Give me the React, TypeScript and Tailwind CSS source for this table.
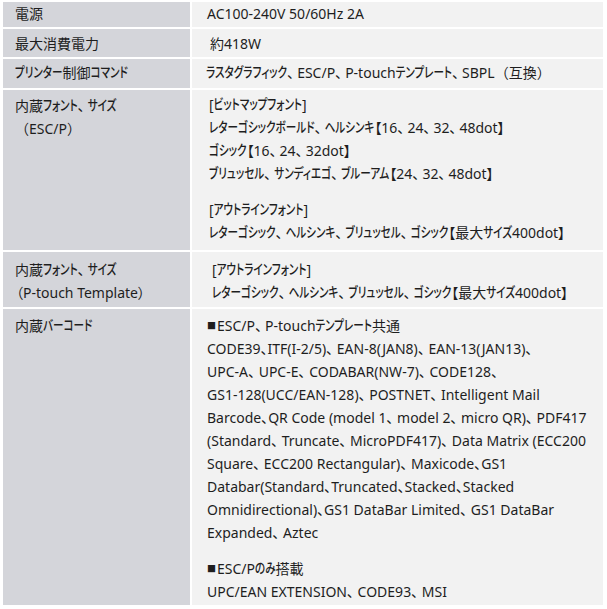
import React from "react";

const L = "w-[187px] shrink-0 bg-[#d4d5da] pl-[12px]";
const R = "w-[411px] shrink-0 bg-[#f2f2f2] pl-[15px]";
const NP = "[font-feature-settings:normal]";
const KANA =
  "inline-block align-top text-[10.6px] font-medium scale-y-[1.32] [font-feature-settings:'palt']";

function J({ t }: { t: string }) {
  const parts = t.split(/([\u3040-\u30ff]+|、|■)/);
  return (
    <>
      {parts.map((p, i) => {
        if (i % 2 === 0) return <React.Fragment key={i}>{p}</React.Fragment>;
        if (p === "、")
          return (
            <span key={i} className="mr-[3px]">
              、
            </span>
          );
        if (p === "■")
          return (
            <span key={i} className="text-[9px] align-[2px] mr-[1px] [font-feature-settings:normal]">
              ■
            </span>
          );
        return (
          <span key={i} className={KANA}>
            {p}
          </span>
        );
      })}
    </>
  );
}

export default function App() {
  return (
    <div className="w-[607px] h-[609px] bg-white pt-[2px] pl-[3px] font-['Noto_Sans','Noto_Sans_CJK_JP',sans-serif] text-[14px] leading-[23px] text-[#1e1e1e] [font-feature-settings:'palt']">
      <div className="flex flex-col gap-[2px]">
        <div className="flex gap-[2px] h-[25px]">
          <div className={L}>電源</div>
          <div className={R}>AC100-240V 50/60Hz 2A</div>
        </div>
        <div className="flex gap-[2px] h-[28px]">
          <div className={`${L} pt-[3px]`}>最大消費電力</div>
          <div className={`${R} pt-[3px]`}>
            <span className="ml-[3px]">約418W</span>
          </div>
        </div>
        <div className="flex gap-[2px] h-[29px]">
          <div className={`${L} pt-[2px] whitespace-nowrap`}>
            <J t="プリンター制御コマンド" />
          </div>
          <div className={`${R} pt-[2px] whitespace-nowrap`}>
            <span className="-ml-[1px]">
              <J t="ラスタグラフィック、ESC/P、P-touchテンプレート、SBPL" />
              <span className={NP}>（互換）</span>
            </span>
          </div>
        </div>
        <div className="flex gap-[2px] h-[160px]">
          <div className={`${L} pt-[4px] whitespace-nowrap`}>
            <div>
              <J t="内蔵フォント、サイズ" />
            </div>
            <div className={NP}>（ESC/P）</div>
          </div>
          <div className={`${R} pt-[3px] whitespace-nowrap`}>
            <div className="pl-[2px]">
              <div>
                <J t="[ビットマップフォント]" />
              </div>
              <div>
                <J t="レターゴシックボールド、ヘルシンキ【16、24、32、48dot】" />
              </div>
              <div>
                <J t="ゴシック【16、24、32dot】" />
              </div>
              <div>
                <J t="ブリュッセル、サンディエゴ、ブルーアム【24、32、48dot】" />
              </div>
              <div className="mt-[13px]">
                <J t="[アウトラインフォント]" />
              </div>
              <div>
                <J t="レターゴシック、ヘルシンキ、ブリュッセル、ゴシック【最大サイズ400dot】" />
              </div>
            </div>
          </div>
        </div>
        <div className="flex gap-[2px] h-[55px]">
          <div className={`${L} pt-[6px] whitespace-nowrap`}>
            <div>
              <J t="内蔵フォント、サイズ" />
            </div>
            <div className="pl-[1px]">（P-touch Template）</div>
          </div>
          <div className={`${R} pt-[6px] whitespace-nowrap`}>
            <div className="pl-[5px]">
              <div>
                <J t="[アウトラインフォント]" />
              </div>
              <div>
                <J t="レターゴシック、ヘルシンキ、ブリュッセル、ゴシック【最大サイズ400dot】" />
              </div>
            </div>
          </div>
        </div>
        <div className="flex gap-[2px] h-[296px]">
          <div className={`${L} pt-[5px] whitespace-nowrap`}>
            <J t="内蔵バーコード" />
          </div>
          <div className={`${R} pt-[5px] whitespace-nowrap`}>
            <div>
              <J t="■ESC/P、P-touchテンプレート共通" />
            </div>
            <div>CODE39、ITF(I-2/5)、 EAN-8(JAN8)、 EAN-13(JAN13)、</div>
            <div>UPC-A、 UPC-E、 CODABAR(NW-7)、 CODE128、</div>
            <div>GS1-128(UCC/EAN-128)、 POSTNET、 Intelligent Mail</div>
            <div>Barcode、QR Code (model 1、 model 2、 micro QR)、 PDF417</div>
            <div>(Standard、 Truncate、 MicroPDF417)、 Data Matrix (ECC200</div>
            <div>Square、 ECC200 Rectangular)、 Maxicode、GS1</div>
            <div>Databar(Standard、Truncated、Stacked、Stacked</div>
            <div>Omnidirectional)、GS1 DataBar Limited、 GS1 DataBar</div>
            <div>Expanded、 Aztec</div>
            <div className="mt-[13px]">
              <J t="■ESC/Pのみ搭載" />
            </div>
            <div>UPC/EAN EXTENSION、 CODE93、 MSI</div>
          </div>
        </div>
      </div>
    </div>
  );
}
